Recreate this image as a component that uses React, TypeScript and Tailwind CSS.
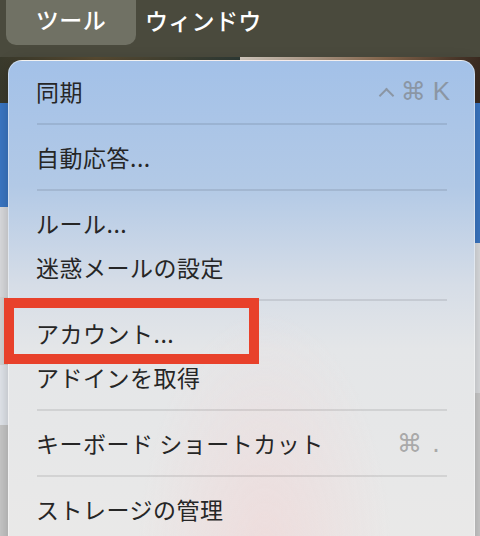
import React from "react";

const Sep = () => (
  <div className="h-[22px] flex items-center pl-[28px] pr-[27px]">
    <div className="h-[2px] w-full bg-black/[0.09]" />
  </div>
);

const Item = ({ label, shortcut, scColor }: { label: string; shortcut?: React.ReactNode; scColor?: string }) => (
  <div className="h-[44px] flex items-center justify-between pl-[27px] pr-[24px]">
    <span className="text-[23px] tracking-[0.5px] text-[#262626] leading-none">{label}</span>
    {shortcut && <span className={`text-[23px] leading-none ${scColor ?? ""}`}>{shortcut}</span>}
  </div>
);

export default function App() {
  return (
    <div className="relative w-[480px] h-[536px] overflow-hidden bg-[#d3d3d3] font-['Noto_Sans_CJK_JP','Noto_Sans',sans-serif]">
      {/* menu bar */}
      <div className="h-[57px] bg-[#4a4a3d] flex items-start">
        <div className="ml-[6px] w-[130px] h-[45px] rounded-b-[10px] bg-[#707164] flex items-center justify-center text-white text-[23px] font-medium leading-none pb-[6px] tracking-[0.5px]">
          ツール
        </div>
        <div className="ml-[9px] h-[40px] flex items-center text-white text-[23px] font-medium leading-none tracking-[0.3px]">
          ウィンドウ
        </div>
      </div>
      {/* background content */}
      <div className="flex h-[479px]">
        <div className="w-[240px] flex flex-col">
          <div className="h-[46px] bg-[linear-gradient(90deg,#3a3a2c,#5a4c32_40%,#2e3b36)]" />
          <div className="h-[104px] bg-[#3b78c6]" />
          <div className="h-[90px] bg-[#dcdde0]" />
          <div className="h-[68px] bg-[#d6d6d6]" />
          <div className="h-[60px] bg-[#e4e8ee]" />
          <div className="flex-1 bg-[#c9c9c9]" />
        </div>
        <div className="flex-1 flex flex-col">
          <div className="h-[46px] bg-[linear-gradient(90deg,#d8cfc4,#8a6a50_60%,#3a2a20)]" />
          <div className="h-[140px] bg-[#3b78c6]" />
          <div className="h-[150px] bg-[#dfe1e4]" />
          <div className="flex-1 bg-[#cdcdcd]" />
        </div>
      </div>

      {/* dropdown menu */}
      <div className="absolute left-[8px] top-[60px] w-[467px] h-[500px] rounded-[14px] border border-white/40 shadow-[0_4px_16px_rgba(0,0,0,0.25)] bg-[radial-gradient(ellipse_at_55%_100%,rgba(240,215,215,0.7),rgba(240,215,215,0)_35%),linear-gradient(180deg,#a3c1e8_0%,#b2c9e6_25%,#d6dde7_45%,#e4e6e8_58%,#eae9e8_100%)] pt-[8px]">
        <Item
          label="同期"
          scColor="text-[#8b96a4]"
          shortcut={
            <span className="flex items-center gap-[7px] font-['DejaVu_Sans',sans-serif] text-[25px]">
              <span className="block w-[11px] h-[11px] border-t-[2.5px] border-l-[2.5px] border-[#8b96a4] rotate-45 mt-[8px] mr-[2px]" />
              <span>⌘</span>
              <span className="font-['Liberation_Sans',sans-serif] text-[26px]">K</span>
            </span>
          }
        />
        <Sep />
        <Item label="自動応答..." />
        <Sep />
        <Item label="ルール..." />
        <Item label="迷惑メールの設定" />
        <Sep />
        <Item label="アカウント..." />
        <Item label="アドインを取得" />
        <Sep />
        <Item
          label="キーボード ショートカット"
          scColor="text-[#a9a9a9]"
          shortcut={
            <span className="flex items-center gap-[10px] pr-[10px] font-['DejaVu_Sans',sans-serif] text-[25px]">
              <span>⌘</span>
              <span>.</span>
            </span>
          }
        />
        <Sep />
        <Item label="ストレージの管理" />
      </div>

      {/* red highlight box */}
      <div className="absolute left-[4px] top-[298px] w-[255px] h-[66px] border-[10px] border-[#e8412b]" />
    </div>
  );
}
